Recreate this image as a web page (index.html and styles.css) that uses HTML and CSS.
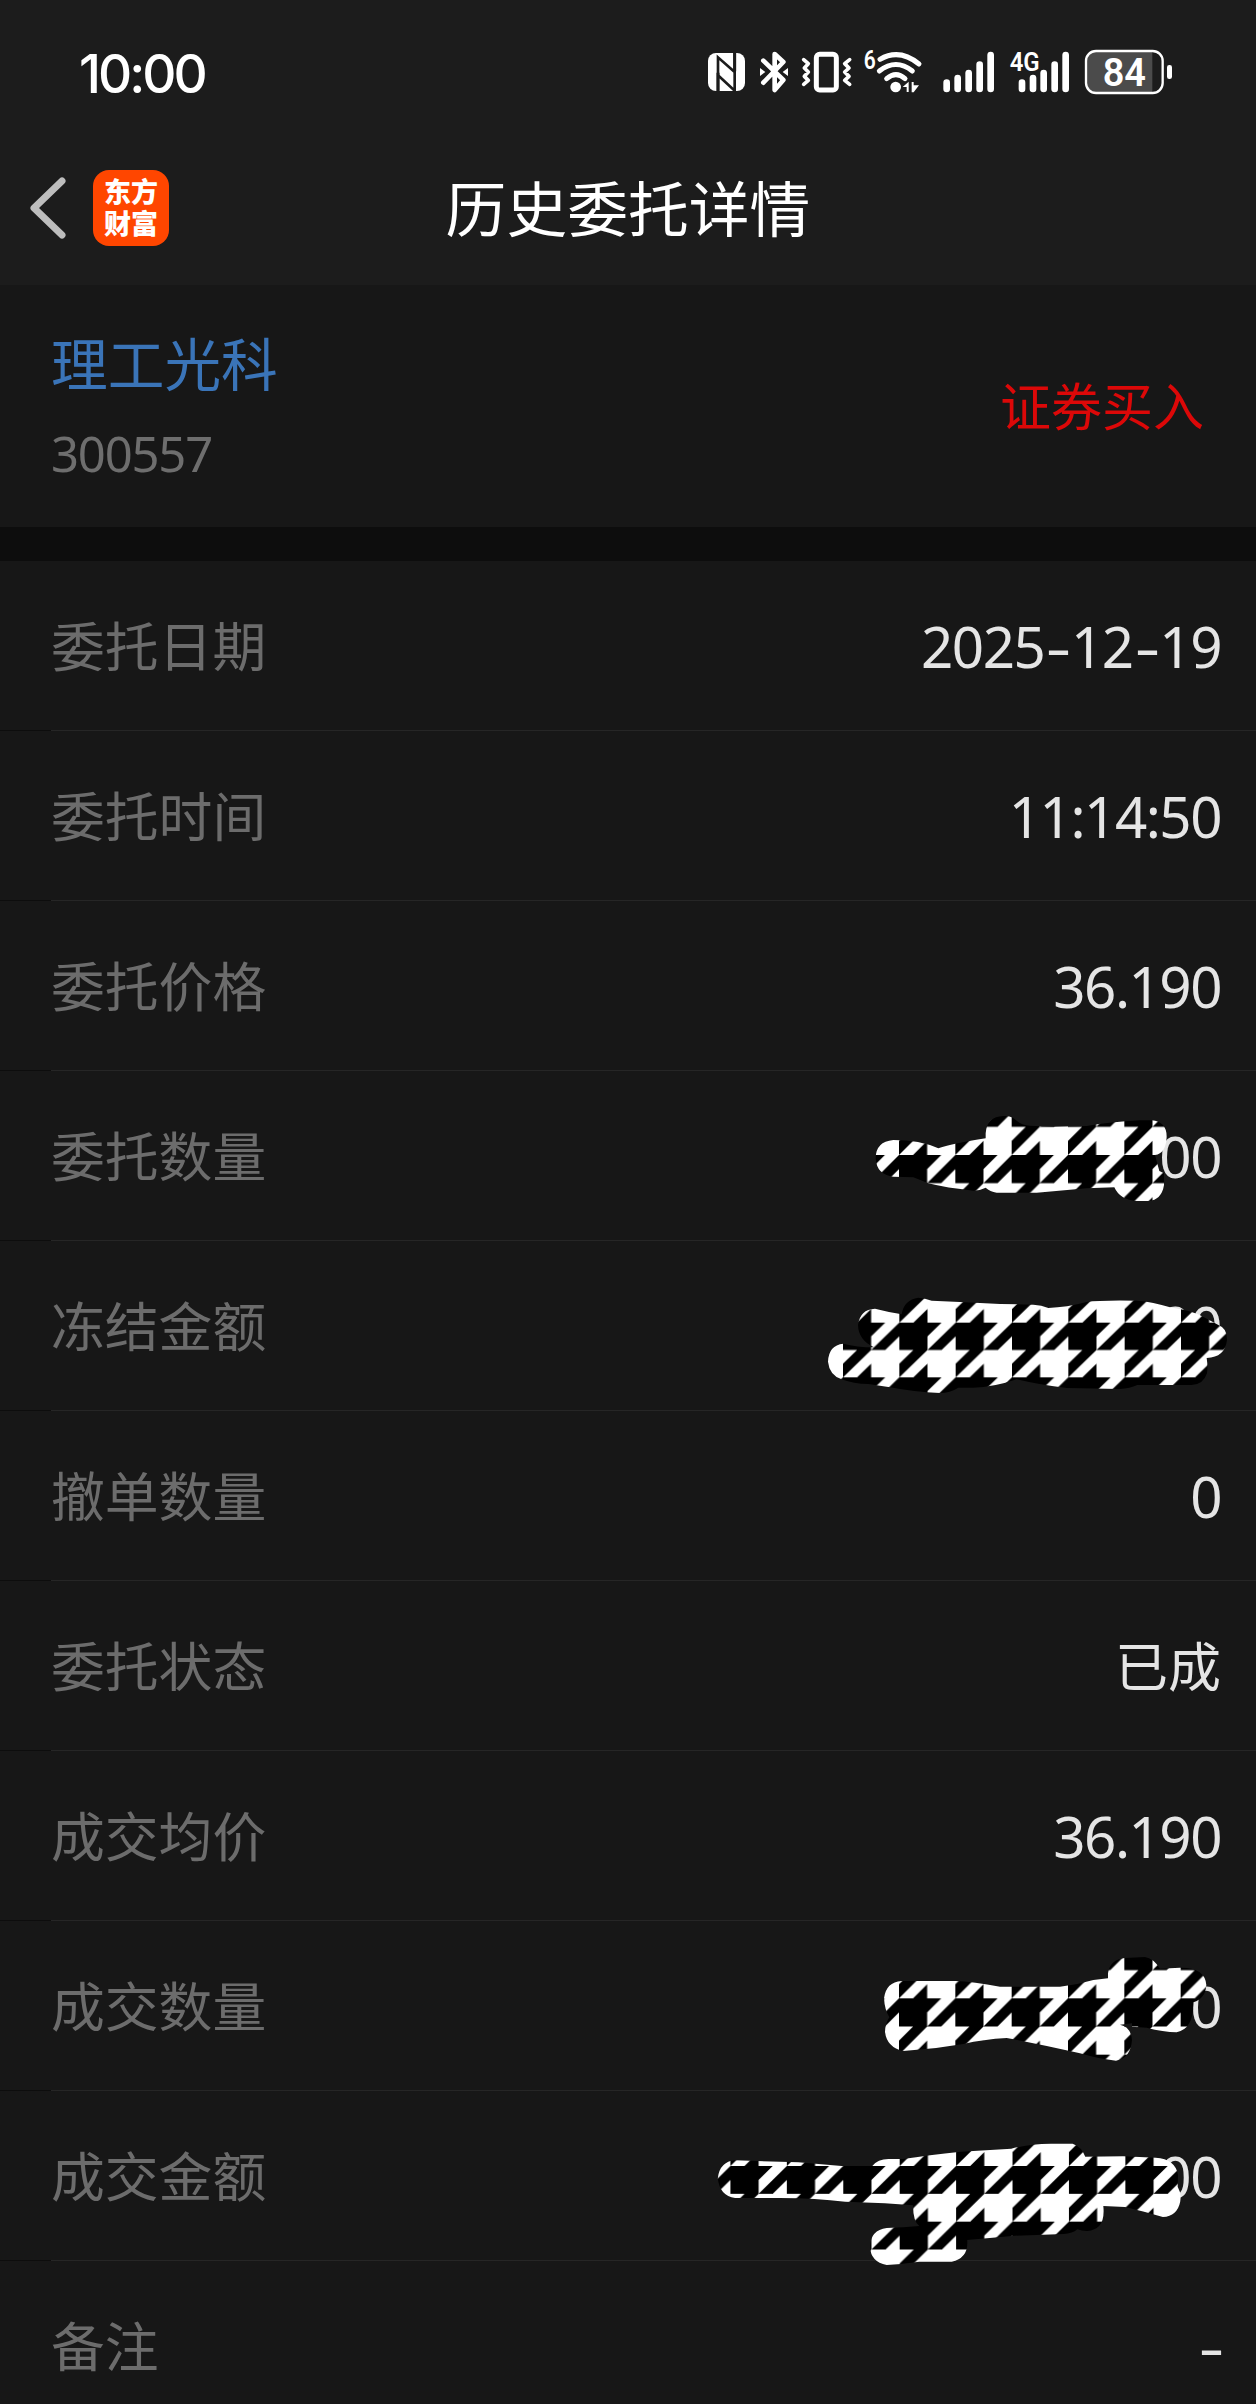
FILE: index.html
```
<!DOCTYPE html>
<html lang="zh-CN">
<head>
    <meta charset="UTF-8">
    <meta name="viewport" content="width=device-width, initial-scale=1.0">
    <title>历史委托详情</title>
    <link rel="stylesheet" href="styles.css">
</head>
<body>
    <!-- 状态栏 -->
    <div class="status-bar">
        <span class="clock">10:00</span>
        <svg class="status-icons" width="500" height="90" viewBox="0 0 1500 270">
            <!-- NFC -->
            <rect x="54" y="69" width="111" height="114" rx="24" fill="#fff"/>
            <path d="M84 184V82L134 126V69M134 69V70M134 104V182L84 136" fill="none" stroke="#1c1c1c" stroke-width="8"/>
            <path d="M134 66V124M84 128V186" fill="none" stroke="#1c1c1c" stroke-width="9"/>
            <!-- 蓝牙 -->
            <path d="M220 92L280 150L254 180V72L280 96L220 158" fill="none" stroke="#fff" stroke-width="14" stroke-linejoin="round" stroke-linecap="round"/>
            <path d="M210 114L226 126L210 138ZM294 114L278 126L294 138Z" fill="#fff"/>
            <!-- 振动 -->
            <rect x="379" y="73" width="60" height="107" rx="10" fill="none" stroke="#fff" stroke-width="15"/>
            <path d="M341 89L355 101L343 114L355 126L343 139L355 151L341 163M479 89L464 101L477 114L464 126L477 139L464 151L479 163" fill="none" stroke="#fff" stroke-width="11" stroke-linejoin="round" stroke-linecap="round"/>
            <!-- WiFi 6 -->
            <text class="net-label" x="521" y="118" font-size="80" textLength="36" lengthAdjust="spacingAndGlyphs">6</text>
            <path d="M570 88Q628 54 687 102M568 123Q618 84 667 123M590 146Q618 122 645 146" fill="none" stroke="#fff" stroke-width="15" stroke-linecap="round"/>
            <circle cx="617" cy="171" r="16" fill="#fff"/>
            <path d="M638 171L656 155V186H650V171ZM665 156H671V166H687L671 187H665Z" fill="#fff"/>
            <!-- 信号 -->
            <path d="M770 158V177M803 144V177M836 129V177M869 104V177M902 75V177" fill="none" stroke="#fff" stroke-width="20" stroke-linecap="round"/>
            <path d="M996 158V177M1029 144V177M1061 129V177M1094 104V177M1127 75V177" fill="none" stroke="#fff" stroke-width="20" stroke-linecap="round"/>
            <text class="net-label" x="959" y="123" font-size="80" textLength="90" lengthAdjust="spacingAndGlyphs">4G</text>
            <!-- 电量 -->
            <path d="M1217 66H1387V186H1217Q1189 186 1189 158V94Q1189 66 1217 66Z" fill="#4b4b4b"/>
            <rect x="1188" y="63" width="230" height="126" rx="30" fill="none" stroke="#fff" stroke-width="7"/>
            <rect x="1431" y="105" width="15" height="42" rx="7" fill="#fff"/>
            <text class="battery-label" x="1238" y="168" font-size="115" textLength="130" lengthAdjust="spacingAndGlyphs">84</text>
        </svg>
    </div>

    <!-- 标题栏 -->
    <header class="nav-bar">
        <svg class="back" width="38" height="64" viewBox="0 0 38 64">
            <path d="M33 5L5 32L33 59" fill="none" stroke="#bdbdbd" stroke-width="7" stroke-linejoin="round" stroke-linecap="round"/>
        </svg>
        <div class="app-logo">东方<br>财富</div>
        <h1>历史委托详情</h1>
    </header>

    <!-- 证券信息 -->
    <section class="stock">
        <div>
            <div class="stock-name">理工光科</div>
            <div class="stock-code">300557</div>
        </div>
        <div class="direction">证券买入</div>
    </section>

    <!-- 千鸟格图案 -->
    <svg class="defs" width="0" height="0">
        <defs>
            <pattern id="check" patternUnits="userSpaceOnUse" x="515" y="195" width="169" height="169" viewBox="0 0 4 4" preserveAspectRatio="none">
                <rect width="4" height="4" fill="#fff"/>
                <path d="M0 0H3L2 1V2H0ZM4 0V1L3 2H2ZM1 2H2L0 4V3ZM2 3V4H1Z" fill="#000"/>
            </pattern>
            <pattern id="check-2" href="#check" x="298" y="158" width="169" height="164"/>
            <pattern id="check-3" href="#check" x="117" y="205"/>
            <pattern id="check-4" href="#check" x="112" y="168" width="156.3" height="167"/>
        </defs>
    </svg>

    <section class="details">
        <div class="row"><span class="label">委托日期</span><span class="value">2025<span class="dash">-</span>12<span class="dash">-</span>19</span></div>
        <div class="row"><span class="label">委托时间</span><span class="value">11:14:50</span></div>
        <div class="row"><span class="label">委托价格</span><span class="value">36.190</span></div>
        <div class="row">
            <span class="label">委托数量</span><span class="value">00</span>
            <svg class="mask mask-order" width="416" height="140" viewBox="0 0 1248 420">
                <path fill="url(#check)" d="M107 205Q107 155 160 150Q240 150 295 175Q340 160 437 145V130Q440 80 490 78Q515 76 530 92Q545 105 570 107L640 110L740 108Q810 96 900 91H935Q980 95 980 140Q978 190 945 195L958 243L972 250V285Q965 330 925 333H890Q840 330 823 292L740 295L590 308H470Q450 305 437 293Q420 302 400 302Q320 294 265 280L220 262L160 260Q110 255 107 205Z"/>
            </svg>
        </div>
        <div class="row">
            <span class="label">冻结金额</span><span class="value">0.00</span>
            <svg class="mask mask-frozen" width="456" height="150" viewBox="0 0 1368 450">
                <path fill="url(#check-2)" d="M84 275Q86 225 130 221Q170 232 222 232Q175 210 174 165Q180 118 225 116Q260 125 305 133Q312 88 355 83Q375 84 395 92L480 96L600 102L700 104Q725 105 745 114Q800 112 860 96Q900 90 1010 92Q1060 95 1110 112Q1180 122 1215 143L1255 165Q1282 175 1281 210Q1275 262 1220 264Q1224 290 1221 310Q1210 344 1175 345H1012Q990 356 960 357L800 354Q720 345 650 328Q580 352 520 353H475Q450 369 420 369Q340 366 270 352L205 342Q160 342 125 328Q88 315 84 275Z"/>
            </svg>
        </div>
        <div class="row"><span class="label">撤单数量</span><span class="value">0</span></div>
        <div class="row"><span class="label">委托状态</span><span class="value value-text">已成</span></div>
        <div class="row"><span class="label">成交均价</span><span class="value">36.190</span></div>
        <div class="row">
            <span class="label">成交数量</span><span class="value">00</span>
            <svg class="mask mask-deal" width="396" height="150" viewBox="0 0 1188 450">
                <path fill="url(#check-3)" d="M72 205Q78 156 125 153H285Q340 155 420 170H600Q650 165 700 150L744 145V130Q750 88 795 84L855 81Q880 85 900 116L960 113Q1035 112 1039 165Q1037 205 1000 217Q1002 295 950 307Q910 306 860 293L816 290V280L780 284Q812 290 816 330Q812 385 768 392Q720 388 660 370Q550 345 440 324Q370 328 310 342Q220 358 130 363Q80 352 75 305Q76 280 88 262Q74 240 72 205Z"/>
            </svg>
        </div>
        <div class="row">
            <span class="label">成交金额</span><span class="value">00</span>
            <svg class="mask mask-amount" width="566" height="294" viewBox="0 0 1568 882" preserveAspectRatio="none">
                <path fill="url(#check-4)" d="M77 205Q82 155 125 151L300 157L420 168H505Q520 147 550 147H590Q660 135 750 125L890 116Q940 102 1000 101H1060Q1085 110 1095 140L1200 139L1290 143Q1345 147 1352 195L1351 230Q1362 250 1358 275Q1350 318 1310 321Q1260 305 1205 291L1145 288Q1152 360 1100 363Q1085 363 1073 358Q1060 371 1035 372L900 377L768 390Q772 445 725 455H635Q590 462 545 465Q500 455 499 410Q500 360 545 354Q590 352 635 348Q618 335 618 286L540 280L430 275Q350 265 250 264H125Q82 258 77 205Z"/>
            </svg>
        </div>
        <div class="row"><span class="label">备注</span><span class="value value-empty"><span class="dash">-</span></span></div>
    </section>
</body>
</html>
```
FILE: styles.css
```
* {
    box-sizing: border-box;
}

body {
    margin: 0;
    width: 1256px;
    height: 2404px;
    overflow: hidden;
    background-color: #171717;
    color: #e5e5e5;
    font-family: "Noto Sans CJK SC", sans-serif;
}

/* 状态栏 */
.status-bar {
    display: flex;
    justify-content: space-between;
    align-items: center;
    height: 150px;
    padding: 0 66px 0 79px;
    background-color: #1c1c1c;
}

.clock {
    padding-bottom: 3px;
    font-family: Inter, sans-serif;
    font-size: 53px;
    font-weight: 500;
    letter-spacing: -3px;
    color: #fff;
}

.net-label,
.battery-label {
    font-family: Roboto, sans-serif;
    font-weight: 600;
    fill: #fff;
}

/* 标题栏 */
.nav-bar {
    display: grid;
    grid-template-columns: 38px 76px 1fr;
    column-gap: 26px;
    align-items: center;
    height: 135px;
    padding: 0 195px 20px 29px;
    background-color: #1c1c1c;
}

.app-logo {
    width: 76px;
    height: 76px;
    padding-top: 5px;
    border-radius: 16px;
    background-color: #ff4600;
    color: #fff;
    font-size: 27px;
    font-weight: 900;
    line-height: 32px;
    text-align: center;
}

.nav-bar h1 {
    margin: 0;
    padding-bottom: 3px;
    color: #fff;
    font-size: 60.8px;
    font-weight: 400;
    line-height: 80px;
    text-align: center;
}

/* 证券信息 */
.stock {
    display: flex;
    justify-content: space-between;
    align-items: center;
    height: 276px;
    padding: 0 52px 0 51px;
    border-bottom: 34px solid #0d0d0d;
}

.stock-name {
    padding-top: 2px;
    color: #3a74b8;
    font-size: 56.7px;
    line-height: 80px;
}

.stock-code {
    margin-top: 12px;
    color: #6e6e6e;
    font-family: "Noto Sans", sans-serif;
    font-size: 49px;
    letter-spacing: -1.2px;
    line-height: 80px;
}

.direction {
    padding-bottom: 4px;
    color: #dc0808;
    font-size: 51px;
    line-height: 80px;
}

/* 委托明细 */
.row {
    position: relative;
    display: flex;
    justify-content: space-between;
    align-items: center;
    height: 170px;
    padding: 0 35px 0 51px;
}

.row:not(:last-child)::after {
    content: '';
    position: absolute;
    left: 0;
    right: 0;
    bottom: 0;
    height: 1px;
    background: linear-gradient(to right, #0d0d0d 51px, #262626 51px);
}

.label {
    padding-bottom: 5px;
    color: #6c6c6c;
    font-size: 53.8px;
}

.value {
    font-family: "Noto Sans", sans-serif;
    font-size: 56.5px;
    letter-spacing: -1.5px;
}

.value-text {
    padding-bottom: 5px;
    font-family: "Noto Sans CJK SC", sans-serif;
    font-size: 53px;
    letter-spacing: 0;
}

.value-empty {
    margin-right: -3px;
}

.dash {
    display: inline-block;
    margin: 0 5px;
    transform: scaleX(1.4);
}

/* 涂抹遮挡 */
.defs {
    position: absolute;
}

.mask {
    position: absolute;
    right: 0;
    z-index: 1;
}

.mask-order {
    top: 19px;
}

.mask-frozen {
    top: 29px;
}

.mask-deal {
    top: 9px;
}

.mask-amount {
    top: 19px;
}
```
